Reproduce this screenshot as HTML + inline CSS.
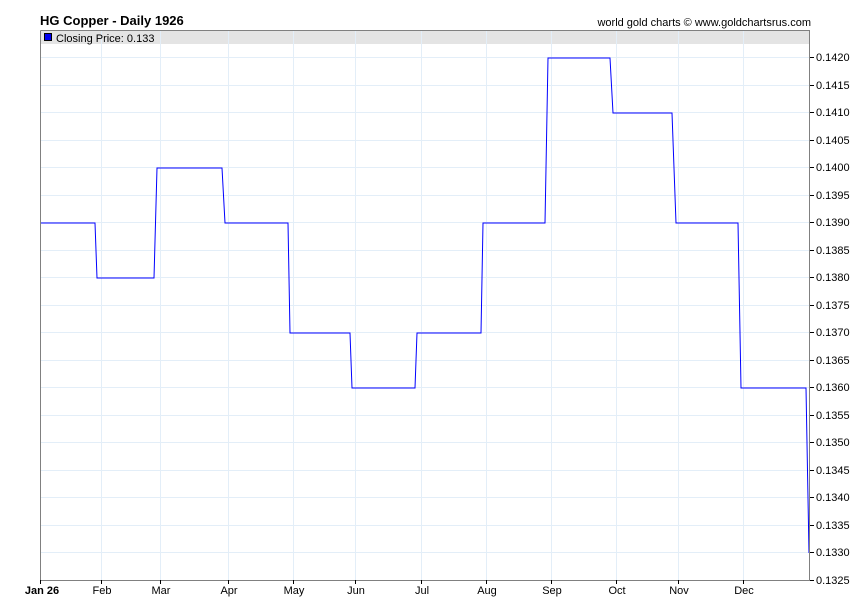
<!DOCTYPE html>
<html><head><meta charset="utf-8"><style>
html,body{margin:0;padding:0;background:#fff;}
svg{display:block;font-family:"Liberation Sans",Arial,sans-serif;}
</style></head><body>
<svg width="850" height="616" viewBox="0 0 850 616" xmlns="http://www.w3.org/2000/svg">
<rect width="850" height="616" fill="#fff"/>
<text x="40" y="25" font-size="13" font-weight="bold" fill="#000">HG Copper - Daily 1926</text>
<text x="811" y="26" font-size="11" fill="#000" text-anchor="end">world gold charts © www.goldchartsrus.com</text>
<rect x="40" y="30" width="770" height="14" fill="#e4e4e4"/>
<g stroke="#e3eef8" stroke-width="1" shape-rendering="crispEdges">
<line x1="101.5" y1="30" x2="101.5" y2="580"/>
<line x1="160.5" y1="30" x2="160.5" y2="580"/>
<line x1="228.5" y1="30" x2="228.5" y2="580"/>
<line x1="293.5" y1="30" x2="293.5" y2="580"/>
<line x1="355.5" y1="30" x2="355.5" y2="580"/>
<line x1="421.5" y1="30" x2="421.5" y2="580"/>
<line x1="486.5" y1="30" x2="486.5" y2="580"/>
<line x1="551.5" y1="30" x2="551.5" y2="580"/>
<line x1="616.5" y1="30" x2="616.5" y2="580"/>
<line x1="678.5" y1="30" x2="678.5" y2="580"/>
<line x1="743.5" y1="30" x2="743.5" y2="580"/>
<line x1="40" y1="552.5" x2="810" y2="552.5"/>
<line x1="40" y1="525.5" x2="810" y2="525.5"/>
<line x1="40" y1="497.5" x2="810" y2="497.5"/>
<line x1="40" y1="470.5" x2="810" y2="470.5"/>
<line x1="40" y1="442.5" x2="810" y2="442.5"/>
<line x1="40" y1="415.5" x2="810" y2="415.5"/>
<line x1="40" y1="387.5" x2="810" y2="387.5"/>
<line x1="40" y1="360.5" x2="810" y2="360.5"/>
<line x1="40" y1="332.5" x2="810" y2="332.5"/>
<line x1="40" y1="305.5" x2="810" y2="305.5"/>
<line x1="40" y1="277.5" x2="810" y2="277.5"/>
<line x1="40" y1="250.5" x2="810" y2="250.5"/>
<line x1="40" y1="222.5" x2="810" y2="222.5"/>
<line x1="40" y1="195.5" x2="810" y2="195.5"/>
<line x1="40" y1="167.5" x2="810" y2="167.5"/>
<line x1="40" y1="140.5" x2="810" y2="140.5"/>
<line x1="40" y1="112.5" x2="810" y2="112.5"/>
<line x1="40" y1="85.5" x2="810" y2="85.5"/>
<line x1="40" y1="57.5" x2="810" y2="57.5"/>
</g>
<rect x="44.5" y="33.5" width="7" height="7" fill="#0000ee" stroke="#000" stroke-width="1"/>
<text x="56" y="42" font-size="11" fill="#000">Closing Price: 0.133</text>
<polyline fill="none" stroke="#0000ff" stroke-width="1" points="40,223 95,223 97,278 154,278 157,168 222,168 225,223 288,223 290,333 350,333 352,388 415,388 417,333 481,333 483,223 545,223 548,58 610,58 613,113 672,113 676,223 738,223 741,388 806,388 809,553"/>
<g stroke="#808080" stroke-width="1" shape-rendering="crispEdges" fill="none">
<polyline points="40.5,30.5 809.5,30.5 809.5,580.5 40.5,580.5 40.5,30.5"/>
</g>
<g stroke="#000" stroke-width="1" shape-rendering="crispEdges">
<line x1="40.5" y1="580" x2="40.5" y2="584"/>
<line x1="101.5" y1="580" x2="101.5" y2="584"/>
<line x1="160.5" y1="580" x2="160.5" y2="584"/>
<line x1="228.5" y1="580" x2="228.5" y2="584"/>
<line x1="293.5" y1="580" x2="293.5" y2="584"/>
<line x1="355.5" y1="580" x2="355.5" y2="584"/>
<line x1="421.5" y1="580" x2="421.5" y2="584"/>
<line x1="486.5" y1="580" x2="486.5" y2="584"/>
<line x1="551.5" y1="580" x2="551.5" y2="584"/>
<line x1="616.5" y1="580" x2="616.5" y2="584"/>
<line x1="678.5" y1="580" x2="678.5" y2="584"/>
<line x1="743.5" y1="580" x2="743.5" y2="584"/>
<line x1="810" y1="580.5" x2="814" y2="580.5"/>
<line x1="810" y1="552.5" x2="814" y2="552.5"/>
<line x1="810" y1="525.5" x2="814" y2="525.5"/>
<line x1="810" y1="497.5" x2="814" y2="497.5"/>
<line x1="810" y1="470.5" x2="814" y2="470.5"/>
<line x1="810" y1="442.5" x2="814" y2="442.5"/>
<line x1="810" y1="415.5" x2="814" y2="415.5"/>
<line x1="810" y1="387.5" x2="814" y2="387.5"/>
<line x1="810" y1="360.5" x2="814" y2="360.5"/>
<line x1="810" y1="332.5" x2="814" y2="332.5"/>
<line x1="810" y1="305.5" x2="814" y2="305.5"/>
<line x1="810" y1="277.5" x2="814" y2="277.5"/>
<line x1="810" y1="250.5" x2="814" y2="250.5"/>
<line x1="810" y1="222.5" x2="814" y2="222.5"/>
<line x1="810" y1="195.5" x2="814" y2="195.5"/>
<line x1="810" y1="167.5" x2="814" y2="167.5"/>
<line x1="810" y1="140.5" x2="814" y2="140.5"/>
<line x1="810" y1="112.5" x2="814" y2="112.5"/>
<line x1="810" y1="85.5" x2="814" y2="85.5"/>
<line x1="810" y1="57.5" x2="814" y2="57.5"/>
</g>
<g font-size="11" fill="#000">
<text x="816" y="584">0.1325</text>
<text x="816" y="556">0.1330</text>
<text x="816" y="529">0.1335</text>
<text x="816" y="501">0.1340</text>
<text x="816" y="474">0.1345</text>
<text x="816" y="446">0.1350</text>
<text x="816" y="419">0.1355</text>
<text x="816" y="391">0.1360</text>
<text x="816" y="364">0.1365</text>
<text x="816" y="336">0.1370</text>
<text x="816" y="309">0.1375</text>
<text x="816" y="281">0.1380</text>
<text x="816" y="254">0.1385</text>
<text x="816" y="226">0.1390</text>
<text x="816" y="199">0.1395</text>
<text x="816" y="171">0.1400</text>
<text x="816" y="144">0.1405</text>
<text x="816" y="116">0.1410</text>
<text x="816" y="89">0.1415</text>
<text x="816" y="61">0.1420</text>
</g>
<g font-size="11" fill="#000" text-anchor="middle">
<text x="42" y="594" font-weight="bold">Jan 26</text>
<text x="102" y="594">Feb</text>
<text x="161" y="594">Mar</text>
<text x="229" y="594">Apr</text>
<text x="294" y="594">May</text>
<text x="356" y="594">Jun</text>
<text x="422" y="594">Jul</text>
<text x="487" y="594">Aug</text>
<text x="552" y="594">Sep</text>
<text x="617" y="594">Oct</text>
<text x="679" y="594">Nov</text>
<text x="744" y="594">Dec</text>
</g>
</svg>
</body></html>
